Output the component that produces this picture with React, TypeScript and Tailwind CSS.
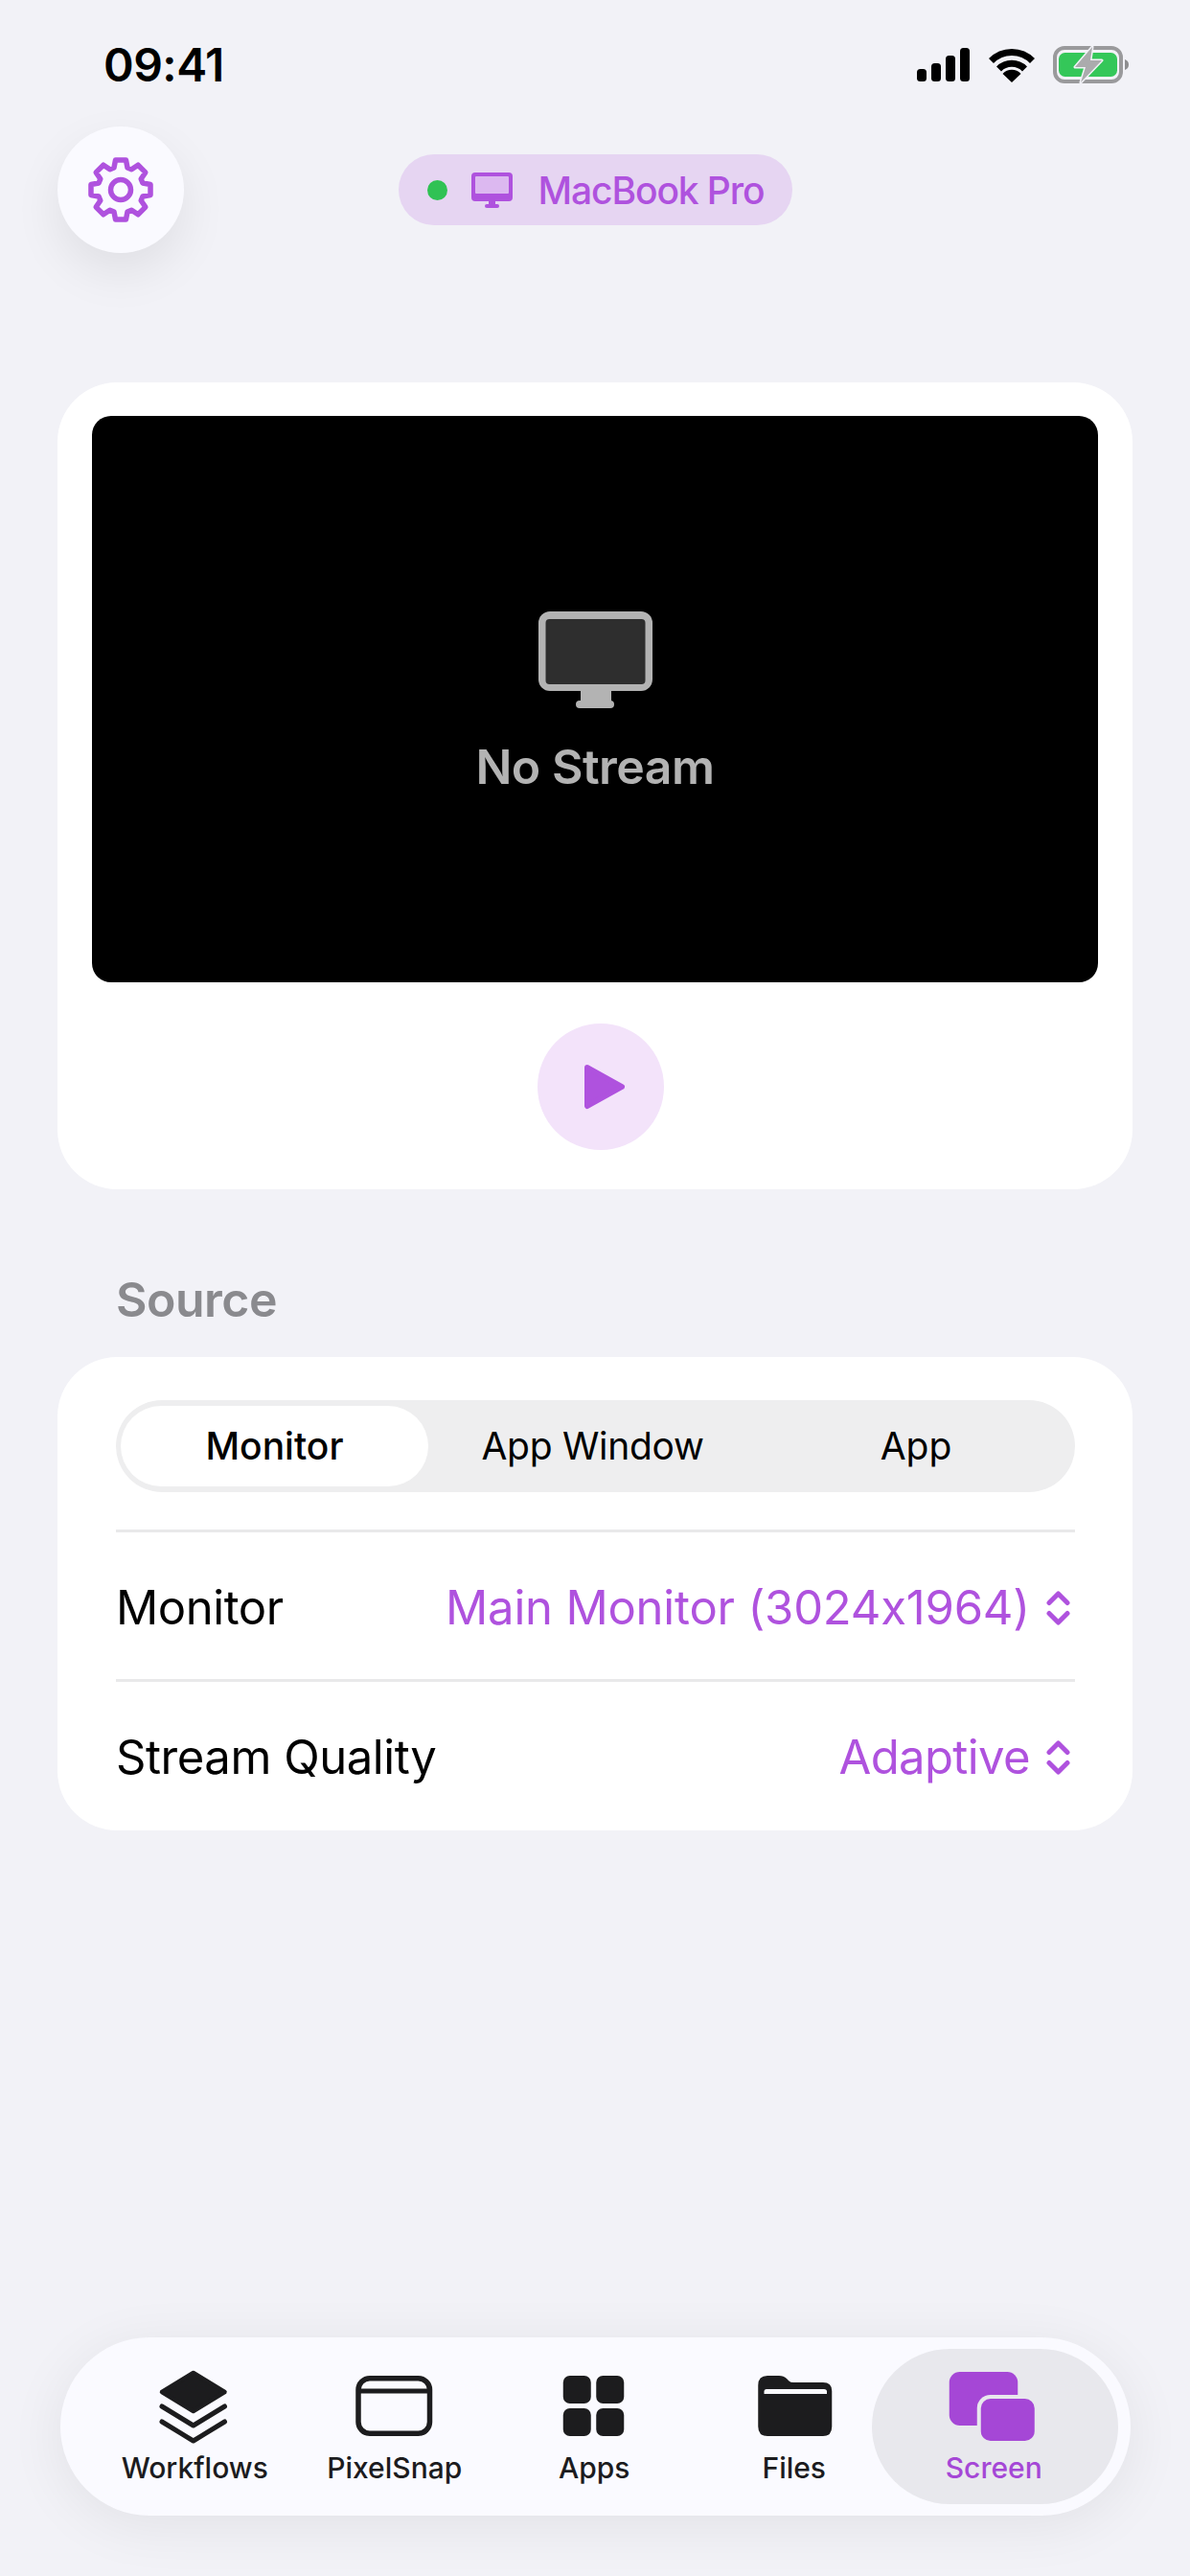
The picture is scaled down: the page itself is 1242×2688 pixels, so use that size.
import React from "react";

const gearPath = (() => {
  const cx = 40, cy = 40, pts: string[] = [];
  for (let i = 0; i < 8; i++) {
    const a = (i * 45 - 90) * Math.PI / 180;
    const add = (r: number, d: number) => {
      const t = a + d * Math.PI / 180;
      pts.push(`${(cx + r * Math.cos(t)).toFixed(2)} ${(cy + r * Math.sin(t)).toFixed(2)}`);
    };
    add(24, -17); add(31.5, -10); add(31.5, 10); add(24, 17);
  }
  return "M" + pts.join("L") + "Z";
})();

const font = { fontFamily: "Inter, 'Noto Sans', sans-serif" };

function Signal() {
  return (
    <svg width="55" height="36" viewBox="0 0 55 36" fill="#000">
      <rect x="0" y="22" width="10" height="13" rx="3.5" />
      <rect x="15" y="16" width="10" height="19" rx="3.5" />
      <rect x="30" y="8" width="10" height="27" rx="3.5" />
      <rect x="45" y="0" width="10" height="35" rx="3.5" />
    </svg>
  );
}
function Wifi() {
  return (
    <svg width="48" height="36" viewBox="0 0 48 36" fill="none" stroke="#000" strokeWidth="7">
      <path d="M2.5 13.5 A30 30 0 0 1 45.5 13.5" />
      <path d="M10.5 22 A19 19 0 0 1 37.5 22" />
      <path d="M24 36 L14.5 27 A13 13 0 0 1 33.5 27 Z" fill="#000" stroke="none" />
    </svg>
  );
}
function Battery() {
  return (
    <svg className="ml-[-1px]" width="79" height="40" viewBox="0 0 79 40" fill="none">
      <rect x="2" y="2" width="69" height="35" rx="10" stroke="#9a9a9c" strokeWidth="4" />
      <rect x="6" y="7" width="61" height="25" rx="6.5" fill="#34c759" />
      <path d="M75 14 C78 15 79 17 79 19.5 C79 22 78 24 75 25 Z" fill="#8e8e90" />
      <path d="M41 1 L23 22 L34 22 L29 38 L51 15 L39 15 Z" fill="#ababad" stroke="#f2f2f7" strokeWidth="3" strokeLinejoin="round" paintOrder="stroke" />
    </svg>
  );
}

function Chevrons() {
  return (
    <svg width="25" height="36" viewBox="0 0 25 36" fill="none" stroke="#af52de" strokeWidth="5" strokeLinecap="round" strokeLinejoin="round">
      <path d="M3 12.5 L12.5 3 L22 12.5" />
      <path d="M3 23.5 L12.5 33 L22 23.5" />
    </svg>
  );
}

function WorkflowsIcon() {
  return (
    <svg width="96" height="80" viewBox="0 0 96 80">
      <path d="M46.75 4 L79.5 24 L46.75 44 L14 24 Z" fill="#1c1c1e" stroke="#1c1c1e" strokeWidth="4.5" strokeLinejoin="round" />
      <path d="M14 39 L46.75 59 L79.5 39" fill="none" stroke="#1c1c1e" strokeWidth="5" strokeLinejoin="round" strokeLinecap="round" />
      <path d="M14 55 L46.75 75 L79.5 55" fill="none" stroke="#1c1c1e" strokeWidth="5" strokeLinejoin="round" strokeLinecap="round" />
    </svg>
  );
}
function PixelSnapIcon() {
  return (
    <svg width="96" height="80" viewBox="0 0 96 80" fill="none" stroke="#1c1c1e" strokeWidth="5.5">
      <rect x="10" y="9.75" width="74.5" height="57.5" rx="12" />
      <path d="M10 23 H84.5" strokeWidth="5" />
    </svg>
  );
}
function AppsIcon() {
  return (
    <svg width="96" height="80" viewBox="0 0 96 80" fill="#1c1c1e">
      <rect x="15.75" y="7" width="29" height="29" rx="7" />
      <rect x="50.25" y="7" width="29" height="29" rx="7" />
      <rect x="15.75" y="41" width="29" height="29" rx="7" />
      <rect x="50.25" y="41" width="29" height="29" rx="7" />
    </svg>
  );
}
function FilesIcon() {
  return (
    <svg width="96" height="80" viewBox="0 0 96 80">
      <path d="M10.25 17 Q10.25 7 20 7 H32 Q37 7 40 10 L42.5 12.5 Q44 14 47 14 H78 Q87.25 14 87.25 23 V60 Q87.25 70 78 70 H20 Q10.25 70 10.25 60 Z" fill="#1c1c1e" />
      <path d="M16.5 26 V23.5 Q16.5 21 19 21 H79 Q82 21 82 23.5 V26 Z" fill="#fafaff" />
    </svg>
  );
}
function ScreenIcon() {
  return (
    <svg width="96" height="80" viewBox="0 0 96 80">
      <rect x="1.75" y="3" width="71.5" height="56" rx="11" fill="#a547d6" />
      <rect x="30.75" y="27" width="64" height="52" rx="14" fill="#e8e8ed" />
      <rect x="34.75" y="31" width="56" height="44" rx="10" fill="#a547d6" />
    </svg>
  );
}

function Tab({ label, icon, active }: { label: string; icon: React.ReactNode; active?: boolean }) {
  return (
    <div className="relative flex h-full w-[208.5px] flex-col items-center pt-[33px]">
      {active && <div className="absolute inset-y-[12px] left-[-23px] right-[-25.5px] rounded-[81px] bg-[#e8e8ed]" />}
      <div className="relative flex h-[80px] w-[96px] justify-center">{icon}</div>
      <span className={`relative mt-[5px] text-[30px] leading-[36px] font-medium ${active ? "text-[#a547d6]" : "text-[#1c1c1e]"}`}>{label}</span>
    </div>
  );
}

export default function App() {
  return (
    <div className="flex h-[2688px] w-[1242px] flex-col overflow-hidden bg-[#f2f2f7] [font-feature-settings:'calt'_0]" style={font}>
      <div className="flex h-[132px] items-center justify-between pt-[4px] pr-[64px] pl-[108px]">
        <span className="text-[48px] leading-none font-semibold tracking-[-0.5px] text-black">09:41</span>
        <div className="flex items-center gap-[20px]">
          <Signal />
          <Wifi />
          <Battery />
        </div>
      </div>

      <div className="grid h-[132px] grid-cols-[1fr_auto_1fr] items-center px-[60px]">
        <div className="flex h-[132px] w-[132px] items-center justify-center rounded-full bg-[#fafaff] shadow-[0_20px_50px_rgba(0,0,0,0.08)]">
          <svg width="80" height="80" viewBox="0 0 80 80" fill="none" stroke="#af52de" strokeWidth="5.5" strokeLinejoin="round">
            <path d={gearPath} />
            <circle cx="40" cy="40" r="10.5" />
          </svg>
        </div>
        <div className="flex h-[74px] w-[411px] items-center rounded-[37px] bg-[#e6d5f2] pl-[30px]">
          <span className="h-[21px] w-[21px] rounded-full bg-[#30c254]" />
          <svg className="ml-[25px]" width="43" height="37" viewBox="0 0 43 37">
            <rect x="0" y="0" width="43" height="30" rx="4" fill="#af52de" />
            <rect x="4" y="4" width="35" height="18" rx="1" fill="#dcb8f0" />
            <rect x="18" y="29" width="7" height="5" fill="#af52de" />
            <rect x="14" y="33" width="15" height="4" rx="2" fill="#af52de" />
          </svg>
          <span className="ml-[27px] text-[39px] leading-none font-medium tracking-[-1.1px] text-[#af52de]">MacBook Pro</span>
        </div>
        <div />
      </div>

      <div className="mx-[60px] mt-[135px] flex h-[842px] flex-col rounded-[62px] bg-white px-[36px] pt-[35px]">
        <div className="flex h-[591px] flex-col items-center justify-center rounded-[20px] bg-black pt-[9px]">
          <svg width="119" height="101" viewBox="0 0 119 101">
            <rect x="0" y="0" width="119" height="83" rx="12" fill="#b3b3b3" />
            <rect x="7.5" y="8" width="104" height="68" rx="4" fill="#2e2e2e" />
            <rect x="44" y="83" width="32" height="12" fill="#b3b3b3" />
            <rect x="39" y="93" width="40" height="8" rx="4" fill="#b3b3b3" />
          </svg>
          <span className="mt-[31px] text-[50px] leading-[60px] font-semibold tracking-[-0.5px] text-[#b3b3b3]">No Stream</span>
        </div>
        <div className="mt-[43px] flex justify-center pl-[12px]">
          <div className="flex h-[132px] w-[132px] items-center justify-center rounded-full bg-[#f3e3fa]">
            <svg width="44" height="48" viewBox="0 0 44 48" className="ml-[8px]">
              <path d="M4 4 L40 24 L4 44 Z" fill="#af52de" stroke="#af52de" strokeWidth="6" strokeLinejoin="round" />
            </svg>
          </div>
        </div>
      </div>

      <div className="mt-[85px] pl-[121px] text-[50px] leading-[60px] font-semibold tracking-[-0.5px] text-[#8a8a8e]">Source</div>

      <div className="mx-[60px] mt-[30px] flex h-[494px] flex-col rounded-[62px] bg-white pt-[45px] pr-[60px] pl-[61px]">
        <div className="flex h-[96px] items-center rounded-[48px] bg-[#eeeeef] pl-[5px] text-[39px] text-black">
          <div className="flex h-[84px] w-[321px] items-center justify-center rounded-[42px] bg-white font-medium">Monitor</div>
          <div className="flex w-[343px] justify-center tracking-[-0.3px]">App Window</div>
          <div className="flex w-[332px] justify-center">App</div>
        </div>
        <div className="mt-[39px] h-[3px] bg-[#e9e9ea]" />
        <div className="flex h-[153px] items-center justify-between pt-[4px] text-[49px] tracking-[-0.45px] text-black">
          <span>Monitor</span>
          <span className="flex items-center gap-[17px] pr-[5px] tracking-[-0.2px] text-[#af52de]">
            Main Monitor (3024x1964)
            <Chevrons />
          </span>
        </div>
        <div className="h-[3px] bg-[#e9e9ea]" />
        <div className="flex h-[155px] items-center justify-between pt-[3px] text-[49px] tracking-[-0.45px] text-black">
          <span>Stream Quality</span>
          <span className="flex items-center gap-[17px] pr-[5px] tracking-[-0.6px] text-[#af52de]">
            Adaptive
            <Chevrons />
          </span>
        </div>
      </div>

      <div className="mt-auto mb-[63px] ml-[63px] flex h-[186px] w-[1117px] rounded-[93px] bg-[#fafaff] pl-[36px] shadow-[0_10px_60px_rgba(0,0,0,0.07)]">
        <Tab label="Workflows" icon={<WorkflowsIcon />} />
        <Tab label="PixelSnap" icon={<PixelSnapIcon />} />
        <Tab label="Apps" icon={<AppsIcon />} />
        <Tab label="Files" icon={<FilesIcon />} />
        <Tab label="Screen" icon={<ScreenIcon />} active />
      </div>
    </div>
  );
}
